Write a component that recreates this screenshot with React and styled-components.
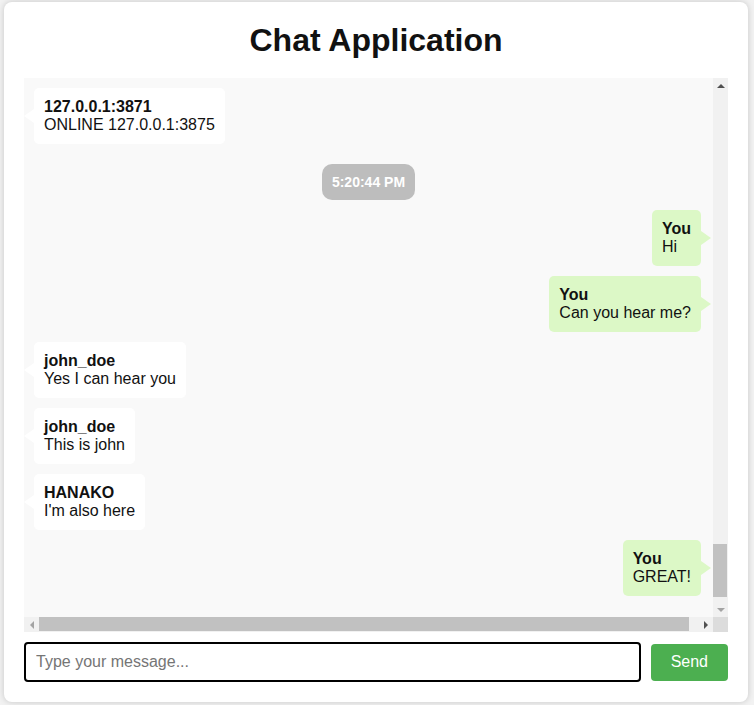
import React from "react";
import styled, { createGlobalStyle } from "styled-components";

const GlobalStyle = createGlobalStyle`
  html, body {
    margin: 0;
    background: #f2f2f2;
    font-family: "Liberation Sans", Arial, sans-serif;
  }
  body {
    padding: 2px 6px 4px 4px;
  }
`;

const Card = styled.div`
  background: #fff;
  border-radius: 8px;
  box-shadow: 0 0 6px rgba(0, 0, 0, 0.18);
  padding: 20px;
`;

const Title = styled.h1`
  margin: 0 0 20px;
  font-size: 32px;
  line-height: 36px;
  font-weight: bold;
  text-align: center;
  color: #111;
`;

// chat panel with its (drawn) scrollbars
const ChatPanel = styled.div`
  height: 554px;
  display: grid;
  grid-template-columns: 1fr 15px;
  grid-template-rows: 1fr 15px;
  background: #f9f9f9;
`;

const Messages = styled.div`
  min-width: 0;
  min-height: 0;
  overflow: hidden;
  padding: 10px;
  display: flex;
  flex-direction: column;
`;

const ScrollTrack = styled.div`
  display: flex;
  flex-direction: ${(p) => (p.$vertical ? "column" : "row")};
  background: #f1f1f1;
`;

const ScrollRail = styled.div`
  flex: 1;
  display: flex;
  flex-direction: ${(p) => (p.$vertical ? "column" : "row")};
  justify-content: ${(p) => (p.$vertical ? "flex-end" : "flex-start")};
`;

const Thumb = styled.div`
  background: #c1c1c1;
  ${(p) =>
    p.$vertical
      ? `height: 53px; margin: 0 1px 5px 0;`
      : `flex: 1; margin: 0 9px 1px 0;`}
`;

const Arrow = styled.div`
  flex: none;
  width: 15px;
  height: 15px;
  display: flex;
  align-items: center;
  justify-content: center;

  &::before {
    content: "";
    border-style: solid;
    border-color: transparent;
    ${(p) => {
      const c = p.$dim ? "#a3a3a3" : "#505050";
      switch (p.$dir) {
        case "up":
          return `border-width: 0 4px 4px; border-bottom-color: ${c};`;
        case "down":
          return `border-width: 4px 4px 0; border-top-color: ${c};`;
        case "left":
          return `border-width: 4px 4px 4px 0; border-right-color: ${c};`;
        default:
          return `border-width: 4px 0 4px 4px; border-left-color: ${c};`;
      }
    }}
  }
`;

const Corner = styled.div`
  background: #dcdcdc;
`;

const Bubble = styled.div`
  position: relative;
  flex: none;
  align-self: ${(p) => (p.$mine ? "flex-end" : "flex-start")};
  margin: 0 ${(p) => (p.$mine ? "2px" : "0")} 10px 0;
  padding: 10px;
  border-radius: 5px;
  background: ${(p) => (p.$mine ? "#dcf8c6" : "#fff")};
  color: #111;
  font-size: 16px;
  line-height: 18px;

  &::after {
    content: "";
    position: absolute;
    top: 50%;
    transform: translateY(-50%);
    border-style: solid;
    border-color: transparent;
    ${(p) =>
      p.$mine
        ? `right: -10px; border-width: 7px 0 7px 10px; border-left-color: #dcf8c6;`
        : `left: -10px; border-width: 7px 10px 7px 0; border-right-color: #fff;`}
  }
`;

const Sender = styled.div`
  font-weight: bold;
`;

const TimeStamp = styled.div`
  flex: none;
  align-self: center;
  margin: 10px 0;
  padding: 10px;
  border-radius: 10px;
  background: #bdbdbd;
  color: #fff;
  font-size: 14px;
  line-height: 16px;
  font-weight: bold;
`;

const InputRow = styled.form`
  display: flex;
  align-items: center;
  gap: 10px;
  margin-top: 10px;
`;

const MessageInput = styled.input`
  flex: 1;
  height: 40px;
  box-sizing: border-box;
  padding: 10px;
  border: 2px solid #000;
  border-radius: 4px;
  font-family: "Liberation Sans", Arial, sans-serif;
  font-size: 16px;
  outline: none;

  &::placeholder {
    color: #757575;
  }
`;

const SendButton = styled.button`
  height: 37px;
  padding: 0 20px;
  border: none;
  border-radius: 4px;
  background: #4caf50;
  color: #fff;
  font-family: "Liberation Sans", Arial, sans-serif;
  font-size: 16px;
  cursor: pointer;
`;

const messages = [
  { name: "127.0.0.1:3871", text: "ONLINE 127.0.0.1:3875" },
  { time: "5:20:44 PM" },
  { name: "You", text: "Hi", mine: true },
  { name: "You", text: "Can you hear me?", mine: true },
  { name: "john_doe", text: "Yes I can hear you" },
  { name: "john_doe", text: "This is john" },
  { name: "HANAKO", text: "I'm also here" },
  { name: "You", text: "GREAT!", mine: true },
];

export default function App() {
  return (
    <>
      <GlobalStyle />
      <Card>
        <Title>Chat Application</Title>
        <ChatPanel>
          <Messages>
            {messages.map((m, i) =>
              m.time ? (
                <TimeStamp key={i}>{m.time}</TimeStamp>
              ) : (
                <Bubble key={i} $mine={m.mine}>
                  <Sender>{m.name}</Sender>
                  <div>{m.text}</div>
                </Bubble>
              )
            )}
          </Messages>
          <ScrollTrack $vertical>
            <Arrow $dir="up" />
            <ScrollRail $vertical>
              <Thumb $vertical />
            </ScrollRail>
            <Arrow $dir="down" $dim />
          </ScrollTrack>
          <ScrollTrack>
            <Arrow $dir="left" $dim />
            <ScrollRail>
              <Thumb />
            </ScrollRail>
            <Arrow $dir="right" />
          </ScrollTrack>
          <Corner />
        </ChatPanel>
        <InputRow onSubmit={(e) => e.preventDefault()}>
          <MessageInput placeholder="Type your message..." autoFocus />
          <SendButton type="submit">Send</SendButton>
        </InputRow>
      </Card>
    </>
  );
}
